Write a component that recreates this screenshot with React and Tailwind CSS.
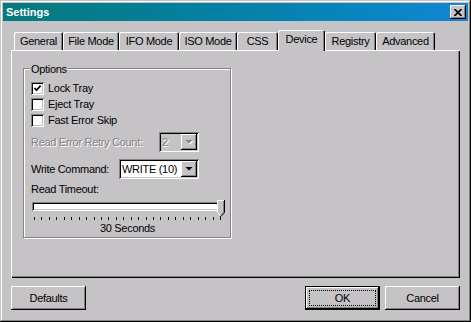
import React from 'react';

// Classic bevels
const raised = 'shadow-[inset_-1px_-1px_#000,inset_1px_1px_#fff,inset_-2px_-2px_#848284]';
const sunken = 'shadow-[inset_1px_1px_#848284,inset_-1px_-1px_#fff,inset_2px_2px_#000,inset_-2px_-2px_#c6c3c6]';

const tabs = [
  { label: 'General', w: 'w-[49px]' },
  { label: 'File Mode', w: 'w-[56px]' },
  { label: 'IFO Mode', w: 'w-[60px]' },
  { label: 'ISO Mode', w: 'w-[58px]' },
  { label: 'CSS', w: 'w-[41px]' },
  { label: 'Device', w: 'w-[47px]', active: true },
  { label: 'Registry', w: 'w-[51px]' },
  { label: 'Advanced', w: 'w-[59px]' },
];

const Check = ({ checked, label }) => (
  <div className="h-[16px] flex items-center gap-[4px]">
    <div className={`w-[13px] h-[13px] bg-white ${sunken} flex items-center justify-center`}>
      {checked && (
        <svg width="9" height="9" viewBox="0 0 9 9">
          <path d="M1.5 4 L3.5 6.3 L7.6 1.6" fill="none" stroke="#000" strokeWidth="1.7" />
        </svg>
      )}
    </div>
    <span>{label}</span>
  </div>
);

const DropButton = ({ disabled }) => (
  <div className={`shrink-0 w-[16px] h-[16px] bg-[#c6c3c6] ${raised} flex items-center justify-center`}>
    <svg width="8" height="5" viewBox="0 0 8 5">
      {disabled && <polygon points="1.5,1 8.5,1 5,4.5" fill="#fff" />}
      <polygon points="0.5,0 7.5,0 4,3.5" fill={disabled ? '#848284' : '#000'} />
    </svg>
  </div>
);

const Combo = ({ value, width, disabled }) => (
  <div className={`shrink-0 ${width} h-[20px] ${disabled ? 'bg-[#c6c3c6]' : 'bg-white'} ${sunken} flex items-center p-[2px]`}>
    <span className={`flex-1 min-w-0 whitespace-nowrap overflow-hidden pl-[1px] ${disabled ? 'text-[#848284] [text-shadow:1px_1px_0_#fff]' : ''}`}>{value}</span>
    <DropButton disabled={disabled} />
  </div>
);

const Button = ({ children, isDefault }) =>
  isDefault ? (
    <div className="w-[75px] h-[24px] border border-black">
      <div className={`w-full h-full ${raised} p-[3px]`}>
        <div className="w-full h-full border border-dotted border-black flex items-center justify-center">{children}</div>
      </div>
    </div>
  ) : (
    <div className={`w-[75px] h-[24px] ${raised} flex items-center justify-center`}>{children}</div>
  );

export default function App() {
  return (
    <div className="w-[471px] h-[322px] bg-[#c6c3c6] p-[3px] flex flex-col text-[11px] leading-[13px] tracking-[-0.3px] text-black font-['Liberation_Sans',Arial,sans-serif] shadow-[inset_-1px_-1px_#000,inset_1px_1px_#c6c3c6,inset_-2px_-2px_#848284,inset_2px_2px_#fff]">
      {/* title bar */}
      <div className="h-[18px] flex items-center justify-between pl-[3px] pr-[2px] bg-linear-to-r from-[#06797b] to-[#1187d4]">
        <span className="text-white font-bold tracking-normal">Settings</span>
        <div className={`w-[16px] h-[14px] bg-[#c6c3c6] ${raised} flex items-center justify-center`}>
          <svg width="8" height="7" viewBox="0 0 8 7">
            <path d="M0.5 0 L7.5 7 M7.5 0 L0.5 7" stroke="#000" strokeWidth="1.6" />
          </svg>
        </div>
      </div>

      <div className="px-[8px] pt-[9px] flex flex-col">
        {/* tabs */}
        <div className="h-[20px] flex items-end pl-[3px]">
          {tabs.map((t) =>
            t.active ? (
              <div
                key={t.label}
                className={`${t.w} h-[21px] -mb-px relative z-10 bg-[#c6c3c6] rounded-t-[2px] flex items-center justify-center pb-[2px] shadow-[inset_1px_1px_#fff,inset_-1px_0_#000,inset_-2px_0_#848284]`}
              >
                {t.label}
              </div>
            ) : (
              <div
                key={t.label}
                className={`${t.w} h-[18px] rounded-t-[2px] flex items-center justify-center shadow-[inset_1px_1px_#fff,inset_-1px_0_#000,inset_-2px_0_#848284]`}
              >
                {t.label}
              </div>
            )
          )}
        </div>

        {/* tab page */}
        <div className="h-[228px] pt-[18px] pl-[12px] shadow-[inset_1px_1px_#fff,inset_-1px_-1px_#000,inset_-2px_-2px_#848284]">
          <div className="relative w-[208px] h-[170px] border border-[#848284] shadow-[inset_1px_1px_#fff,1px_1px_#fff] pl-[7px] pt-[11px] flex flex-col">
            <span className="absolute left-[6px] -top-[6px] px-[1px] bg-[#c6c3c6]">Options</span>
            <Check checked label="Lock Tray" />
            <Check label="Eject Tray" />
            <Check label="Fast Error Skip" />

            <div className="mt-[4px] w-[168px] h-[20px] flex items-center justify-between">
              <span className="whitespace-nowrap text-[#848284] [text-shadow:1px_1px_0_#fff]">Read Error Retry Count:</span>
              <Combo value="2" width="w-[40px]" disabled />
            </div>
            <div className="mt-[7px] w-[168px] h-[20px] flex items-center justify-between">
              <span className="whitespace-nowrap">Write Command:</span>
              <Combo value="WRITE (10)" width="w-[80px]" />
            </div>
            <div className="mt-[4px] h-[13px]">Read Timeout:</div>

            {/* slider */}
            <div className="relative w-[193px] pt-[6px] flex flex-col">
              <div className={`ml-[1px] w-[191px] h-[9px] bg-white ${sunken}`} />
              <div className="mt-[5px] ml-[3px] w-[187px] h-[4px] flex items-end justify-between">
                {Array.from({ length: 26 }).map((_, i) => (
                  <div key={i} className={`w-px bg-black ${i === 25 ? 'h-[6px]' : 'h-[3px]'}`} />
                ))}
              </div>
              <div className="mt-[2px] h-[13px] text-center">30 Seconds</div>
              <svg className="absolute left-[186px] top-[4px]" width="8" height="17" viewBox="0 0 8 17">
                <path d="M0 0 H8 V12.5 L4 16.5 L0 12.5 Z" fill="#c6c3c6" />
                <path d="M0.5 12.5 V0.5 H7" fill="none" stroke="#fff" />
                <path d="M7.5 0 V12.7 L4 16.3" fill="none" stroke="#000" />
                <path d="M6.5 1 V12.3 L3.8 15" fill="none" stroke="#848284" />
                <path d="M0.5 12.5 L3.5 15.5" fill="none" stroke="#fff" />
              </svg>
            </div>
          </div>
        </div>

        {/* buttons */}
        <div className="mt-[8px] flex items-center">
          <Button>Defaults</Button>
          <div className="ml-auto">
            <Button isDefault>OK</Button>
          </div>
          <div className="ml-[5px]">
            <Button>Cancel</Button>
          </div>
        </div>
      </div>
    </div>
  );
}
